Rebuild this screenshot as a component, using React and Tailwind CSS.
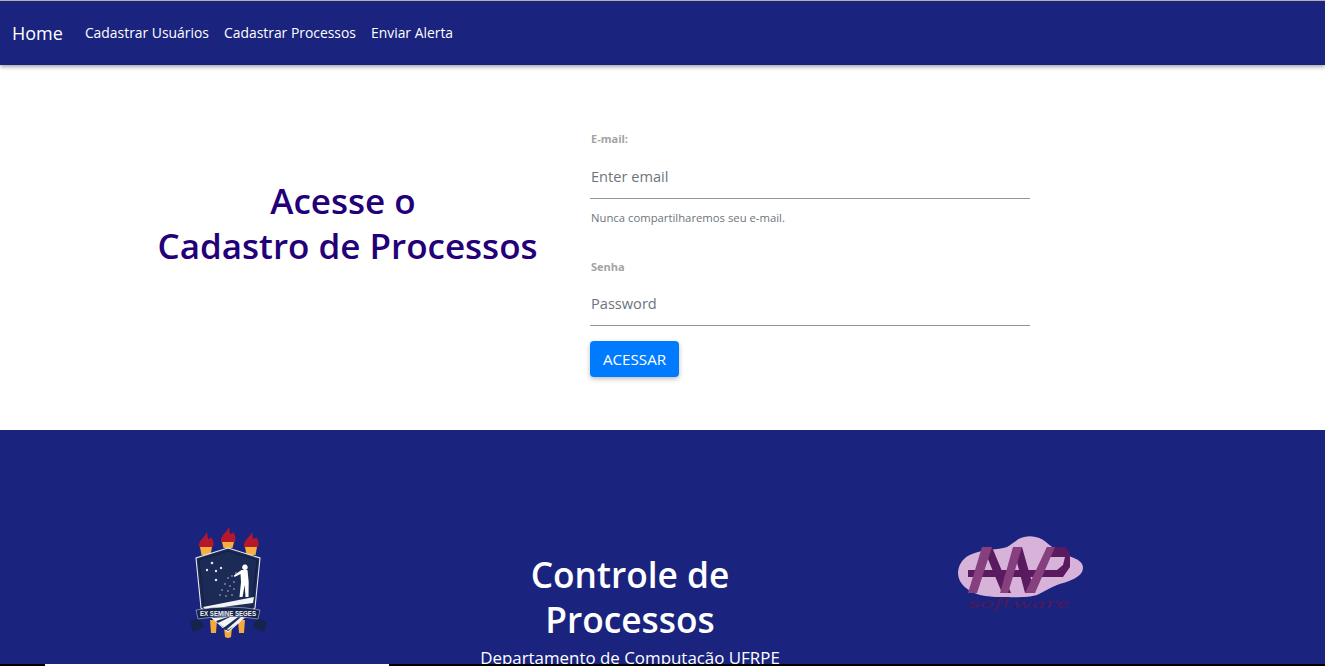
import React from "react";

function flamePath(x, b) {
  return `M${x - 7} ${b}C${x - 8} ${b - 7} ${x - 2} ${b - 8} ${x + 1} ${b - 15}C${x + 2} ${b - 11} ${x + 1} ${b - 9} ${x + 3} ${b - 8}C${x + 5} ${b - 9} ${x + 5} ${b - 10} ${x + 5} ${b - 10}C${x + 8} ${b - 6} ${x + 8} ${b - 3} ${x + 7} ${b}Z`;
}

function CrestLogo() {
  const torches = [
    { x: 36, bottom: 37, cup: 8 },
    { x: 58, bottom: 32, cup: 6 },
    { x: 81, bottom: 37, cup: 8 },
  ];
  return (
    <svg viewBox="0 0 120 140" className="w-[120px] h-[140px]">
      {/* bottom torch handles */}
      <path d="M40 110h7l-1 13h-5z M54 118h8l-1 9q-3 2-6 0z M68 110h7l-1 13h-5z" fill="#f5a93a" />
      {/* torches */}
      {torches.map((t) => (
        <g key={t.x}>
          <path d={`M${t.x - 6} ${t.bottom}h12l-1.5 ${t.cup}h-9z`} fill="#f5b041" />
          <path d={flamePath(t.x, t.bottom)} fill="#b5182b" />
        </g>
      ))}
      {/* shield */}
      <path d="M58 38L90 48L85 98L58 122L31 98L26 48Z" fill="#1b2a54" stroke="#e8ebf2" strokeWidth="1.1" />
      <path d="M58 41L87 50L82 96L58 118L34 96L29 50Z" fill="#1c2b55" stroke="#101c40" strokeWidth="0.8" />
      {/* ground */}
      <path d="M33 97L84 87L83 93L60 96L36 100Z" fill="#f2f4f8" />
      <path d="M42 108L75 106L69 113L58 120L48 113Z" fill="#f2f4f8" />
      <path d="M52 119L68 107L71 107L56 120Z M46 111L58 107L60 107L48 113Z" fill="#1c2b55" />
      {/* sower figure */}
      <path
        d="M75 54.5a2.8 2.8 0 1 1-.1 0zM71.5 60h6l1.2 12l-.2 15h-3l-.8-12l-2.200 12h-3l1.500-15l-.5-8l-6 3l-.6-1.500z"
        fill="#ffffff"
      />
      {/* stars and seeds */}
      {[
        [42, 53, 1.3], [37, 60, 1.2], [46, 61, 1.2], [51, 58, 1.2], [46, 70, 1.3],
        [62, 66, .7], [58, 68, .7], [66, 63, .7], [55, 74, .7], [60, 76, .7], [64, 72, .7],
        [52, 80, .7], [58, 81, .7], [64, 79, .7], [50, 85, .7], [56, 86, .7], [62, 85, .7],
      ].map(([x, y, r], i) => (
        <circle key={i} cx={x} cy={y} r={r} fill="#dfe4ef" />
      ))}
      {/* ribbon */}
      <path d="M20 112l10-4l4 9l-11 5z" fill="#16234a" />
      <path d="M97 112l-10-4l-4 9l11 5z" fill="#16234a" />
      <path d="M26 100Q58 94 90 100L88 109Q58 104 28 109Z" fill="#16234a" stroke="#dfe4ef" strokeWidth=".5" />
      <text x="58" y="105.500" textAnchor="middle" fontSize="6.400" fontWeight="700" fill="#f2f4f8" fontFamily="Liberation Sans, sans-serif" textLength="56" lengthAdjust="spacingAndGlyphs">
        EX SEMINE SEGES
      </text>
    </svg>
  );
}

function SoftwareLogo() {
  return (
    <svg viewBox="0 0 160 100" className="w-[160px] h-[100px]">
      {/* blob */}
      <path
        d="M18 47C19 38 24 32 32 29C43 24 58 25 67 22C73 19 76 14 84 12C92 10 100 12 106 17C112 23 124 29 134 33C141 36 145 40 142 47C138 54 126 57 117 60C109 63 104 67 97 70C88 73 72 72 60 72C47 72 34 70 26 63C21 59 18 54 18 47Z"
        fill="#d7b3d9"
      />
      {/* A and N strokes, dark side */}
      <path d="M43 22L52 22L71 68L62 68Z" fill="#5a1a5f" />
      <path d="M73 22L82 22L95 68L85 68Z" fill="#5a1a5f" />
      {/* P bowl running into the crossbar */}
      <path d="M107 22L125 22L130 28L130 42L123 52L28 52L28 45L117 45L123 40L125 32L103 32Z" fill="#5a1a5f" />
      {/* A and N strokes, light side */}
      <path d="M28 68L42 22L52 22L37 68Z" fill="#87407f" />
      <path d="M60 68L73 22L82 22L68 68Z" fill="#87407f" />
      <path d="M85 68L107 22L115 22L95 68Z" fill="#87407f" />
      <text
        x="28"
        y="83"
        fontSize="13"
        fontStyle="italic"
        fill="#4c1a5c"
        fontFamily="DejaVu Serif, serif"
        textLength="102"
        lengthAdjust="spacingAndGlyphs"
      >
        software
      </text>
    </svg>
  );
}

export default function App() {
  return (
    <div className="h-[666px] flex flex-col overflow-hidden bg-white font-['Open_Sans',sans-serif]">
      <div className="flex-1 min-h-0 overflow-hidden">
        {/* Navbar */}
        <nav className="h-[65px] bg-[#1a237e] border-t border-[#b0b0b0] shadow-[0_2px_4px_rgba(0,0,0,0.35)] relative flex items-center pl-3 pt-px text-white">
          <a className="text-[18px] mr-[22px]">Home</a>
          <a className="text-[13.900px] mr-[15px]">Cadastrar Usuários</a>
          <a className="text-[13.900px] mr-[15px]">Cadastrar Processos</a>
          <a className="text-[13.900px]">Enviar Alerta</a>
        </nav>

        {/* Login */}
        <main className="h-[365px] flex pl-[120px]">
          <div className="w-[455px] pt-[113px] text-center text-[35px] leading-[45px] font-[550] text-[#230078]">
            <h1>
              Acesse o&nbsp;
              <br />
              Cadastro de Processos
            </h1>
          </div>
          <form className="w-[440px] ml-[15px] pt-[66px]">
            <label className="block pl-px text-[11px] leading-4 font-bold text-[#a3a3a3]">E-mail:</label>
            <input
              placeholder="Enter email"
              className="w-full h-[48px] mt-[4px] pt-[2px] pl-px border-b border-[#949494] text-[14.600px] text-[#495057] outline-none placeholder:text-[#6c757d]"
            />
            <p className="mt-[11px] pl-px text-[11.300px] leading-4 text-[#6c757d]">Nunca compartilharemos seu e-mail.</p>
            <label className="block mt-[33px] pl-px text-[11px] leading-4 font-bold text-[#a3a3a3]">Senha</label>
            <input
              placeholder="Password"
              className="w-full h-[47px] mt-[4px] pt-[2px] pl-px border-b border-[#949494] text-[14.600px] text-[#495057] outline-none placeholder:text-[#6c757d]"
            />
            <button
              type="button"
              className="block mt-[15px] w-[89px] h-9 rounded bg-[#007bff] text-white text-[15.200px] shadow-[0_2px_5px_rgba(0,0,0,0.26)]"
            >
              ACESSAR
            </button>
          </form>
        </main>

        {/* Footer */}
        <footer className="h-[300px] bg-[#1a237e] grid grid-cols-[400px_400px_380px] px-[30px] text-white">
          <div className="flex justify-center pt-[80px]">
            <CrestLogo />
          </div>
          <div className="pt-[122px] text-center">
            <h2 className="text-[35.300px] leading-[45px] font-semibold">
              Controle de
              <br />
              Processos
            </h2>
            <p className="mt-[4px] text-[16.900px] leading-6">Departamento de Computação UFRPE</p>
          </div>
          <div className="flex justify-center pt-[95px]">
            <SoftwareLogo />
          </div>
        </footer>
      </div>

      {/* window edge along the bottom */}
      <div className="h-[2px] shrink-0 bg-black pl-[45px]">
        <div className="w-[344px] h-full bg-white" />
      </div>
    </div>
  );
}
